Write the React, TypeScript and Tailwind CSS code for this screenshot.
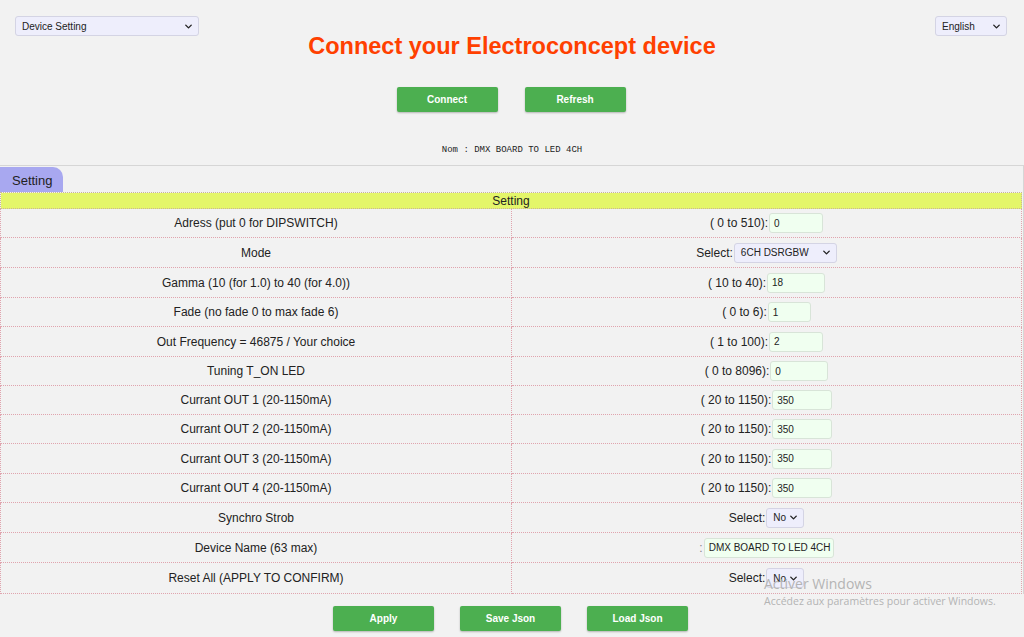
import { ChevronDown } from 'lucide-react'

type Row = {
  label: string
  kind: 'input' | 'select' | 'name'
  range?: string
  value: string
  w: number
  h: number
}

const rows: Row[] = [
  { label: 'Adress (put 0 for DIPSWITCH)', kind: 'input', range: '( 0 to 510):', value: '0', w: 54, h: 29 },
  { label: 'Mode', kind: 'select', range: 'Select:', value: '6CH DSRGBW', w: 103, h: 30 },
  { label: 'Gamma (10 (for 1.0) to 40 (for 4.0))', kind: 'input', range: '( 10 to 40):', value: '18', w: 58, h: 30 },
  { label: 'Fade (no fade 0 to max fade 6)', kind: 'input', range: '( 0 to 6):', value: '1', w: 43, h: 29 },
  { label: 'Out Frequency = 46875 / Your choice', kind: 'input', range: '( 1 to 100):', value: '2', w: 54, h: 30 },
  { label: 'Tuning T_ON LED', kind: 'input', range: '( 0 to 8096):', value: '0', w: 58, h: 29 },
  { label: 'Currant OUT 1 (20-1150mA)', kind: 'input', range: '( 20 to 1150):', value: '350', w: 60, h: 29 },
  { label: 'Currant OUT 2 (20-1150mA)', kind: 'input', range: '( 20 to 1150):', value: '350', w: 60, h: 29 },
  { label: 'Currant OUT 3 (20-1150mA)', kind: 'input', range: '( 20 to 1150):', value: '350', w: 60, h: 30 },
  { label: 'Currant OUT 4 (20-1150mA)', kind: 'input', range: '( 20 to 1150):', value: '350', w: 60, h: 29 },
  { label: 'Synchro Strob', kind: 'select', range: 'Select:', value: 'No', w: 38, h: 30 },
  { label: 'Device Name (63 max)', kind: 'name', range: ':', value: 'DMX BOARD TO LED 4CH', w: 130, h: 30 },
  { label: 'Reset All (APPLY TO CONFIRM)', kind: 'select', range: 'Select:', value: 'No', w: 38, h: 31 },
]

function FakeSelect({ value, w, className = '' }: { value: string; w: number; className?: string }) {
  return (
    <div
      className={`flex h-[20px] items-center justify-between rounded-[3px] border border-[#d4d4e4] bg-[#eeeefc] pl-[6px] pr-[4px] text-[10px] text-[#222] ${className}`}
      style={{ width: w }}
    >
      <span>{value}</span>
      <ChevronDown size={11} strokeWidth={3} />
    </div>
  )
}

function GreenButton({ children }: { children: string }) {
  return (
    <button className="h-[25px] w-[101px] rounded-[2px] bg-[#4caf50] text-[10px] font-bold text-white shadow-[0_1px_2px_rgba(0,0,0,0.25)]">
      {children}
    </button>
  )
}

export default function App() {
  return (
    <div className="relative h-[637px] w-[1024px] overflow-hidden bg-[#f2f2f2] font-['Liberation_Sans',Arial,sans-serif] text-[#222]">
      <div className="flex items-start justify-between px-[15px] pt-[16px]">
        <FakeSelect value="Device Setting" w={184} className="text-[10.5px]" />
        <FakeSelect value="English" w={72} className="mr-[2px] text-[10.5px]" />
      </div>
      <h1 className="mt-[-4px] text-center text-[23.5px] font-bold leading-[28px] text-[#ff4000]">
        Connect your Electroconcept device
      </h1>

      <div className="mt-[27px] flex justify-center gap-[27px] pr-[2px]">
        <GreenButton>Connect</GreenButton>
        <GreenButton>Refresh</GreenButton>
      </div>

      <p className="mt-[33px] text-center font-['Liberation_Mono',monospace] text-[9px] leading-[10px] text-[#222]">
        Nom : DMX BOARD TO LED 4CH
      </p>

      <div className="mt-[10px] border-t border-r border-[#d6d6d6] pr-px">
        <div className="flex h-[26px] items-end">
          <div className="flex h-[25px] w-[63px] items-end rounded-tr-[10px] bg-[#a8a8f0] pl-[12px] text-[13px] leading-[22px] text-[#222]">
            Setting
          </div>
        </div>
        <table className="w-full border-collapse text-[12px]">
          <tbody>
            <tr className="h-[16px] bg-[#e4f66a]">
              <td colSpan={2} className="border border-dotted border-[#c9b59a] p-0 text-center text-[12px] leading-[14px]">
                Setting
              </td>
            </tr>
            {rows.map((r) => (
              <tr key={r.label} style={{ height: r.h }}>
                <td className="w-[511px] border border-dotted border-[#e0a4ae] p-0 text-center">{r.label}</td>
                <td className="border border-dotted border-[#e0a4ae] p-0">
                  <div className="flex items-center justify-center">
                    <span className={r.kind === 'name' ? 'text-[#888]' : ''}>{r.range}</span>
                    {r.kind === 'select' ? (
                      <FakeSelect value={r.value} w={r.w} className="ml-px" />
                    ) : (
                      <div
                        className="ml-px flex h-[20px] items-center whitespace-nowrap rounded-[3px] border border-[#d8e4d8] bg-[#f0fff0] px-[4px] text-[10px] text-[#222]"
                        style={{ width: r.w }}
                      >
                        {r.value}
                      </div>
                    )}
                  </div>
                </td>
              </tr>
            ))}
          </tbody>
        </table>
      </div>

      <div className="mt-[12px] flex justify-center gap-[26px] pr-[3px]">
        <GreenButton>Apply</GreenButton>
        <GreenButton>Save Json</GreenButton>
        <GreenButton>Load Json</GreenButton>
      </div>

      <div className="pointer-events-none absolute left-[764px] top-[575px] font-['Open_Sans',sans-serif] text-[#b4b4b4]">
        <div className="text-[14px] leading-[18px]">Activer Windows</div>
        <div className="text-[10.5px] leading-[16px]">Accédez aux paramètres pour activer Windows.</div>
      </div>
    </div>
  )
}
